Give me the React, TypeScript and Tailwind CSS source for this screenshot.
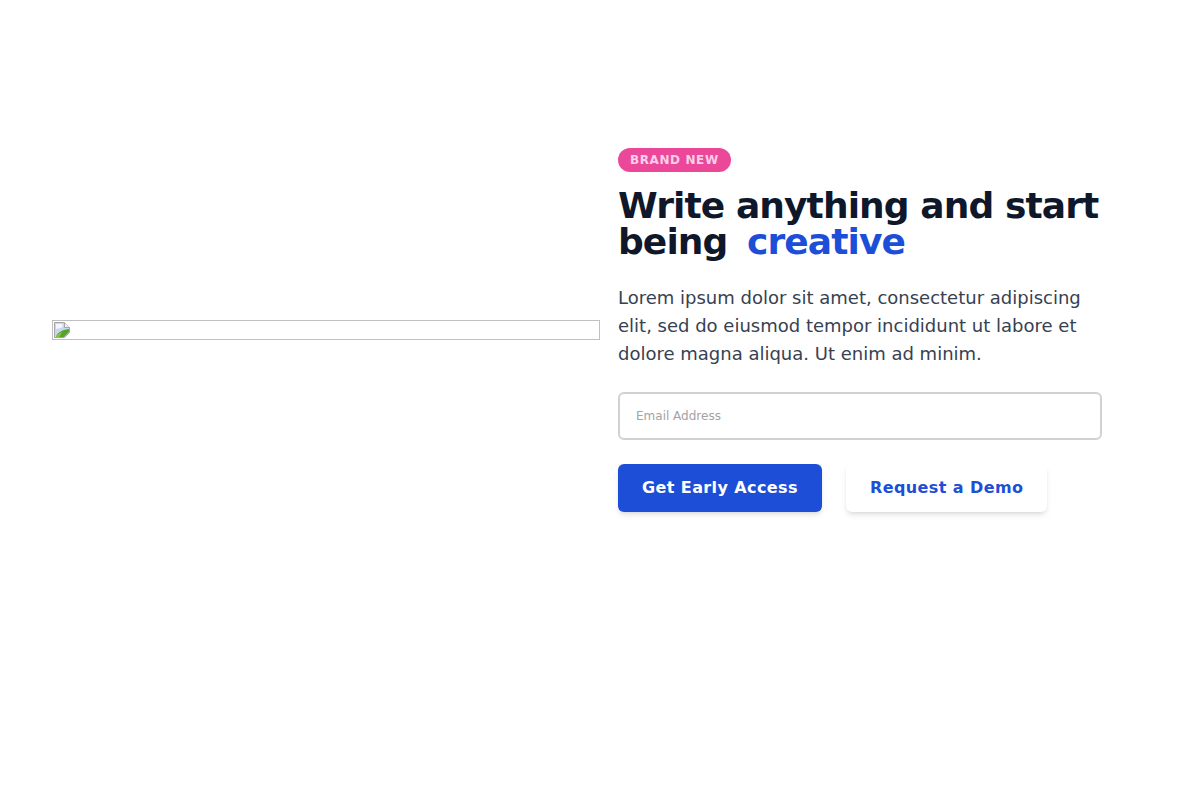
const FONT = "font-['DejaVu_Sans',sans-serif]";

function BrokenImage() {
  return (
    <div className="h-5 w-[548px] shrink-0 border border-[#c0c0c0] pl-px pt-px">
      <svg width="16" height="16" viewBox="0 0 16 16" className="block">
        <path d="M.5.5h10l5 5v5l-5 5H.5z" fill="#c6d8f0" stroke="#a6a6a6" />
        <path d="M2 2h6l1 2-2 2-5 1z" fill="#f4f7fc" />
        <path d="M10.5.5v5h5" fill="#f2f2f2" stroke="#a6a6a6" />
        <path d="M2 15c1-4 5-7 13-8v3l-5 5z" fill="#5aa02c" />
        <path d="M2 15c1-2 3-4 6-5-1 2-2 4-3 5z" fill="#8cc63f" />
      </svg>
    </div>
  );
}

export default function App() {
  return (
    <main className={`flex h-[660px] items-center gap-[18px] bg-white pl-[52px] ${FONT}`}>
      <BrokenImage />
      <section className="w-[484px]">
        <span className="inline-block rounded-full bg-[#ec4899] px-3 py-1 align-top text-xs leading-4 font-bold tracking-wider text-[#fbcfe8]">
          BRAND NEW
        </span>
        <h1 className="mt-4 text-4xl leading-none font-bold tracking-tight text-[#0f172a]">
          Write anything and start being <span className="ml-2 text-[#1d4ed8]">creative</span>
        </h1>
        <p className="mt-6 text-lg leading-7 text-[#374151]">
          Lorem ipsum dolor sit amet, consectetur adipiscing elit, sed do eiusmod tempor incididunt ut labore et dolore magna aliqua. Ut enim ad minim.
        </p>
        <input
          type="email"
          placeholder="Email Address"
          className="mt-6 block h-12 w-full rounded-md border-2 border-[#d1d1d4] bg-white px-4 text-xs text-[#374151] placeholder:text-[#a3a3a3]"
        />
        <div className="mt-6 flex gap-6">
          <button type="button" className="h-12 rounded-md bg-[#1d4ed8] px-6 text-base font-bold tracking-wide text-white shadow-md">
            Get Early Access
          </button>
          <button type="button" className="h-12 rounded-md bg-white px-6 text-base font-bold tracking-wide text-[#1d4ed8] shadow-md">
            Request a Demo
          </button>
        </div>
      </section>
    </main>
  );
}
